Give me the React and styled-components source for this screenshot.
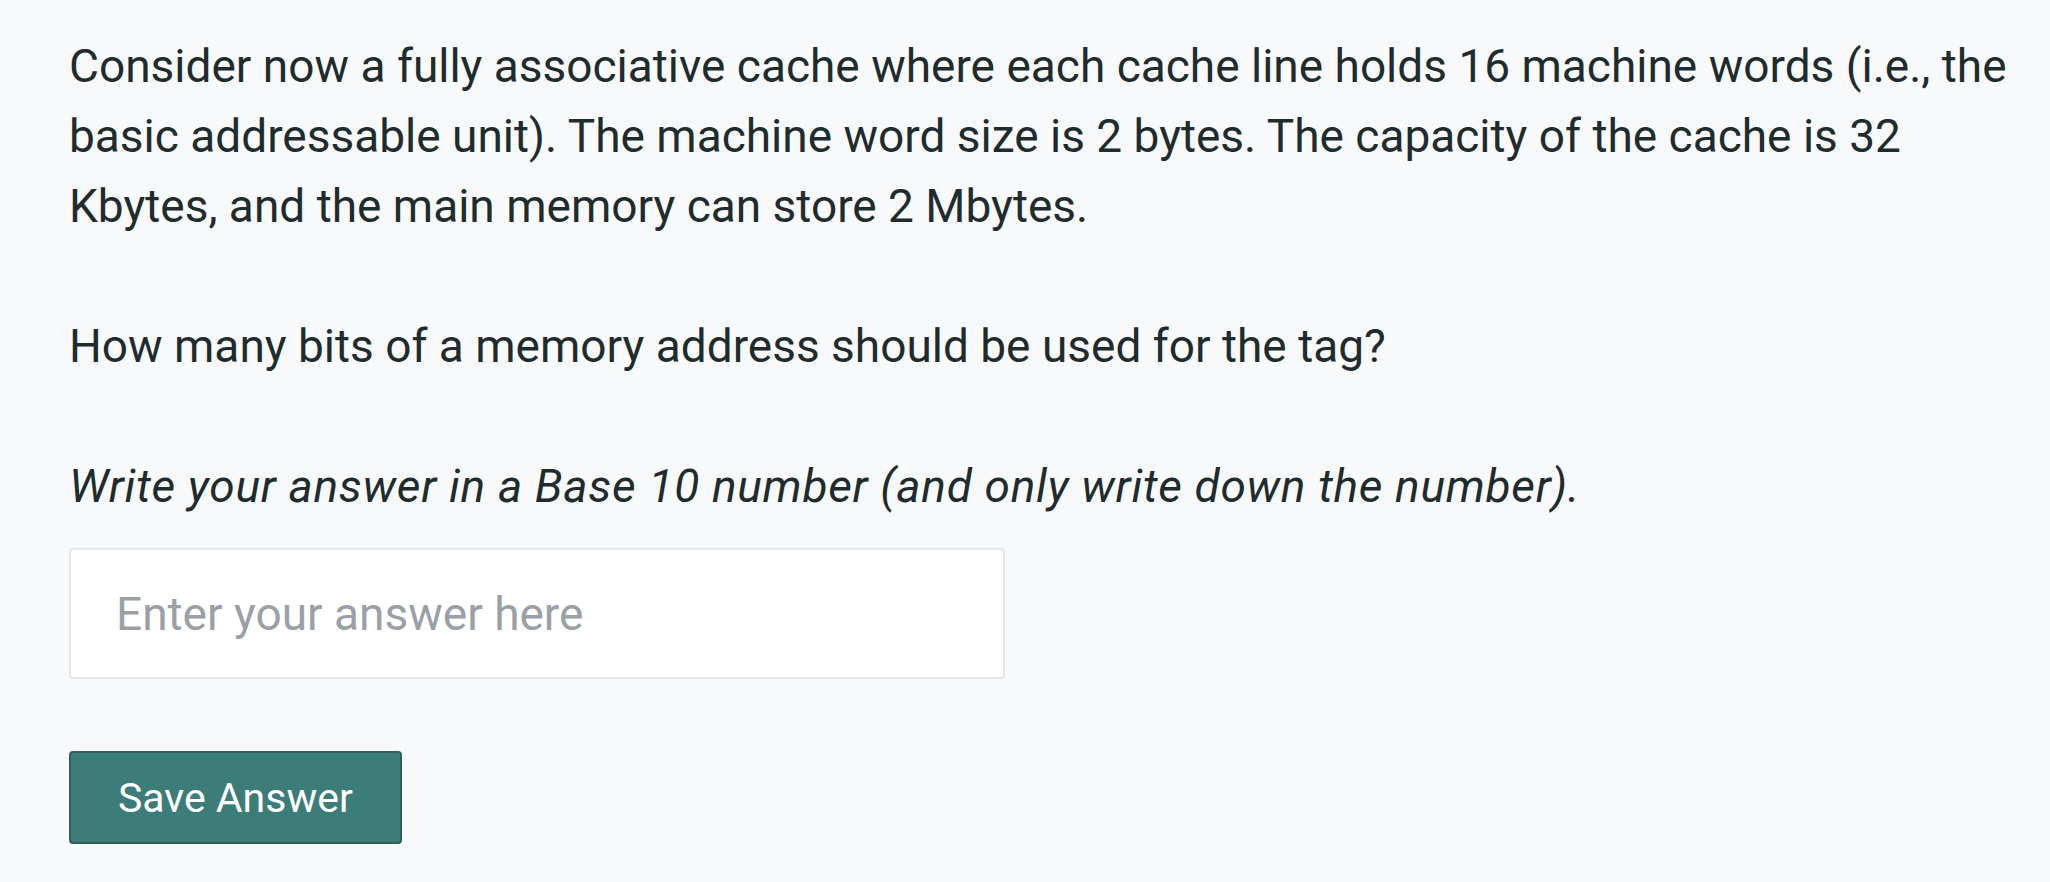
import React from 'react'
import styled, { createGlobalStyle } from 'styled-components'

const Global = createGlobalStyle`
  body {
    margin: 0;
    background: #f8f9fb;
  }
`

const Question = styled.div`
  padding: 31px 30px 0 69px;
  font-family: Roboto, 'Liberation Sans', sans-serif;
  color: #1f2c2e;
`

const Paragraph = styled.p`
  margin: 0 0 70px;
  font-size: 46px;
  line-height: 70px;
  font-style: ${p => (p.$italic ? 'italic' : 'normal')};
  letter-spacing: ${p => (p.$italic ? '0.7px' : '0')};
  max-width: 1950px;
`

const AnswerForm = styled.form`
  display: flex;
  flex-direction: column;
  align-items: flex-start;
  gap: 72px;
  margin-top: -43px;
`

const AnswerInput = styled.input`
  box-sizing: border-box;
  width: 936px;
  height: 131px;
  padding: 0 45px;
  background: #fff;
  border: 2px solid #e3e6eb;
  border-radius: 4px;
  font-family: inherit;
  font-size: 46px;
  color: #1f2c2e;
  outline: none;

  &::placeholder {
    color: #9aa0a8;
  }
`

const SaveButton = styled.button`
  box-sizing: border-box;
  height: 93px;
  padding: 0 47px;
  background: #3d7d79;
  border: 2px solid #2f5f5c;
  border-radius: 4px;
  color: #fff;
  font-family: inherit;
  font-size: 41px;
  cursor: pointer;
`

export default function App() {
  return (
    <>
      <Global />
      <Question>
        <Paragraph>
          Consider now a fully associative cache where each cache line holds 16 machine words (i.e., the
          basic addressable unit). The machine word size is 2 bytes. The capacity of the cache is 32
          Kbytes, and the main memory can store 2 Mbytes.
        </Paragraph>
        <Paragraph>How many bits of a memory address should be used for the tag?</Paragraph>
        <Paragraph $italic>
          Write your answer in a Base 10 number (and only write down the number).
        </Paragraph>
        <AnswerForm onSubmit={e => e.preventDefault()}>
          <AnswerInput type="text" placeholder="Enter your answer here" />
          <SaveButton type="submit">Save Answer</SaveButton>
        </AnswerForm>
      </Question>
    </>
  )
}
